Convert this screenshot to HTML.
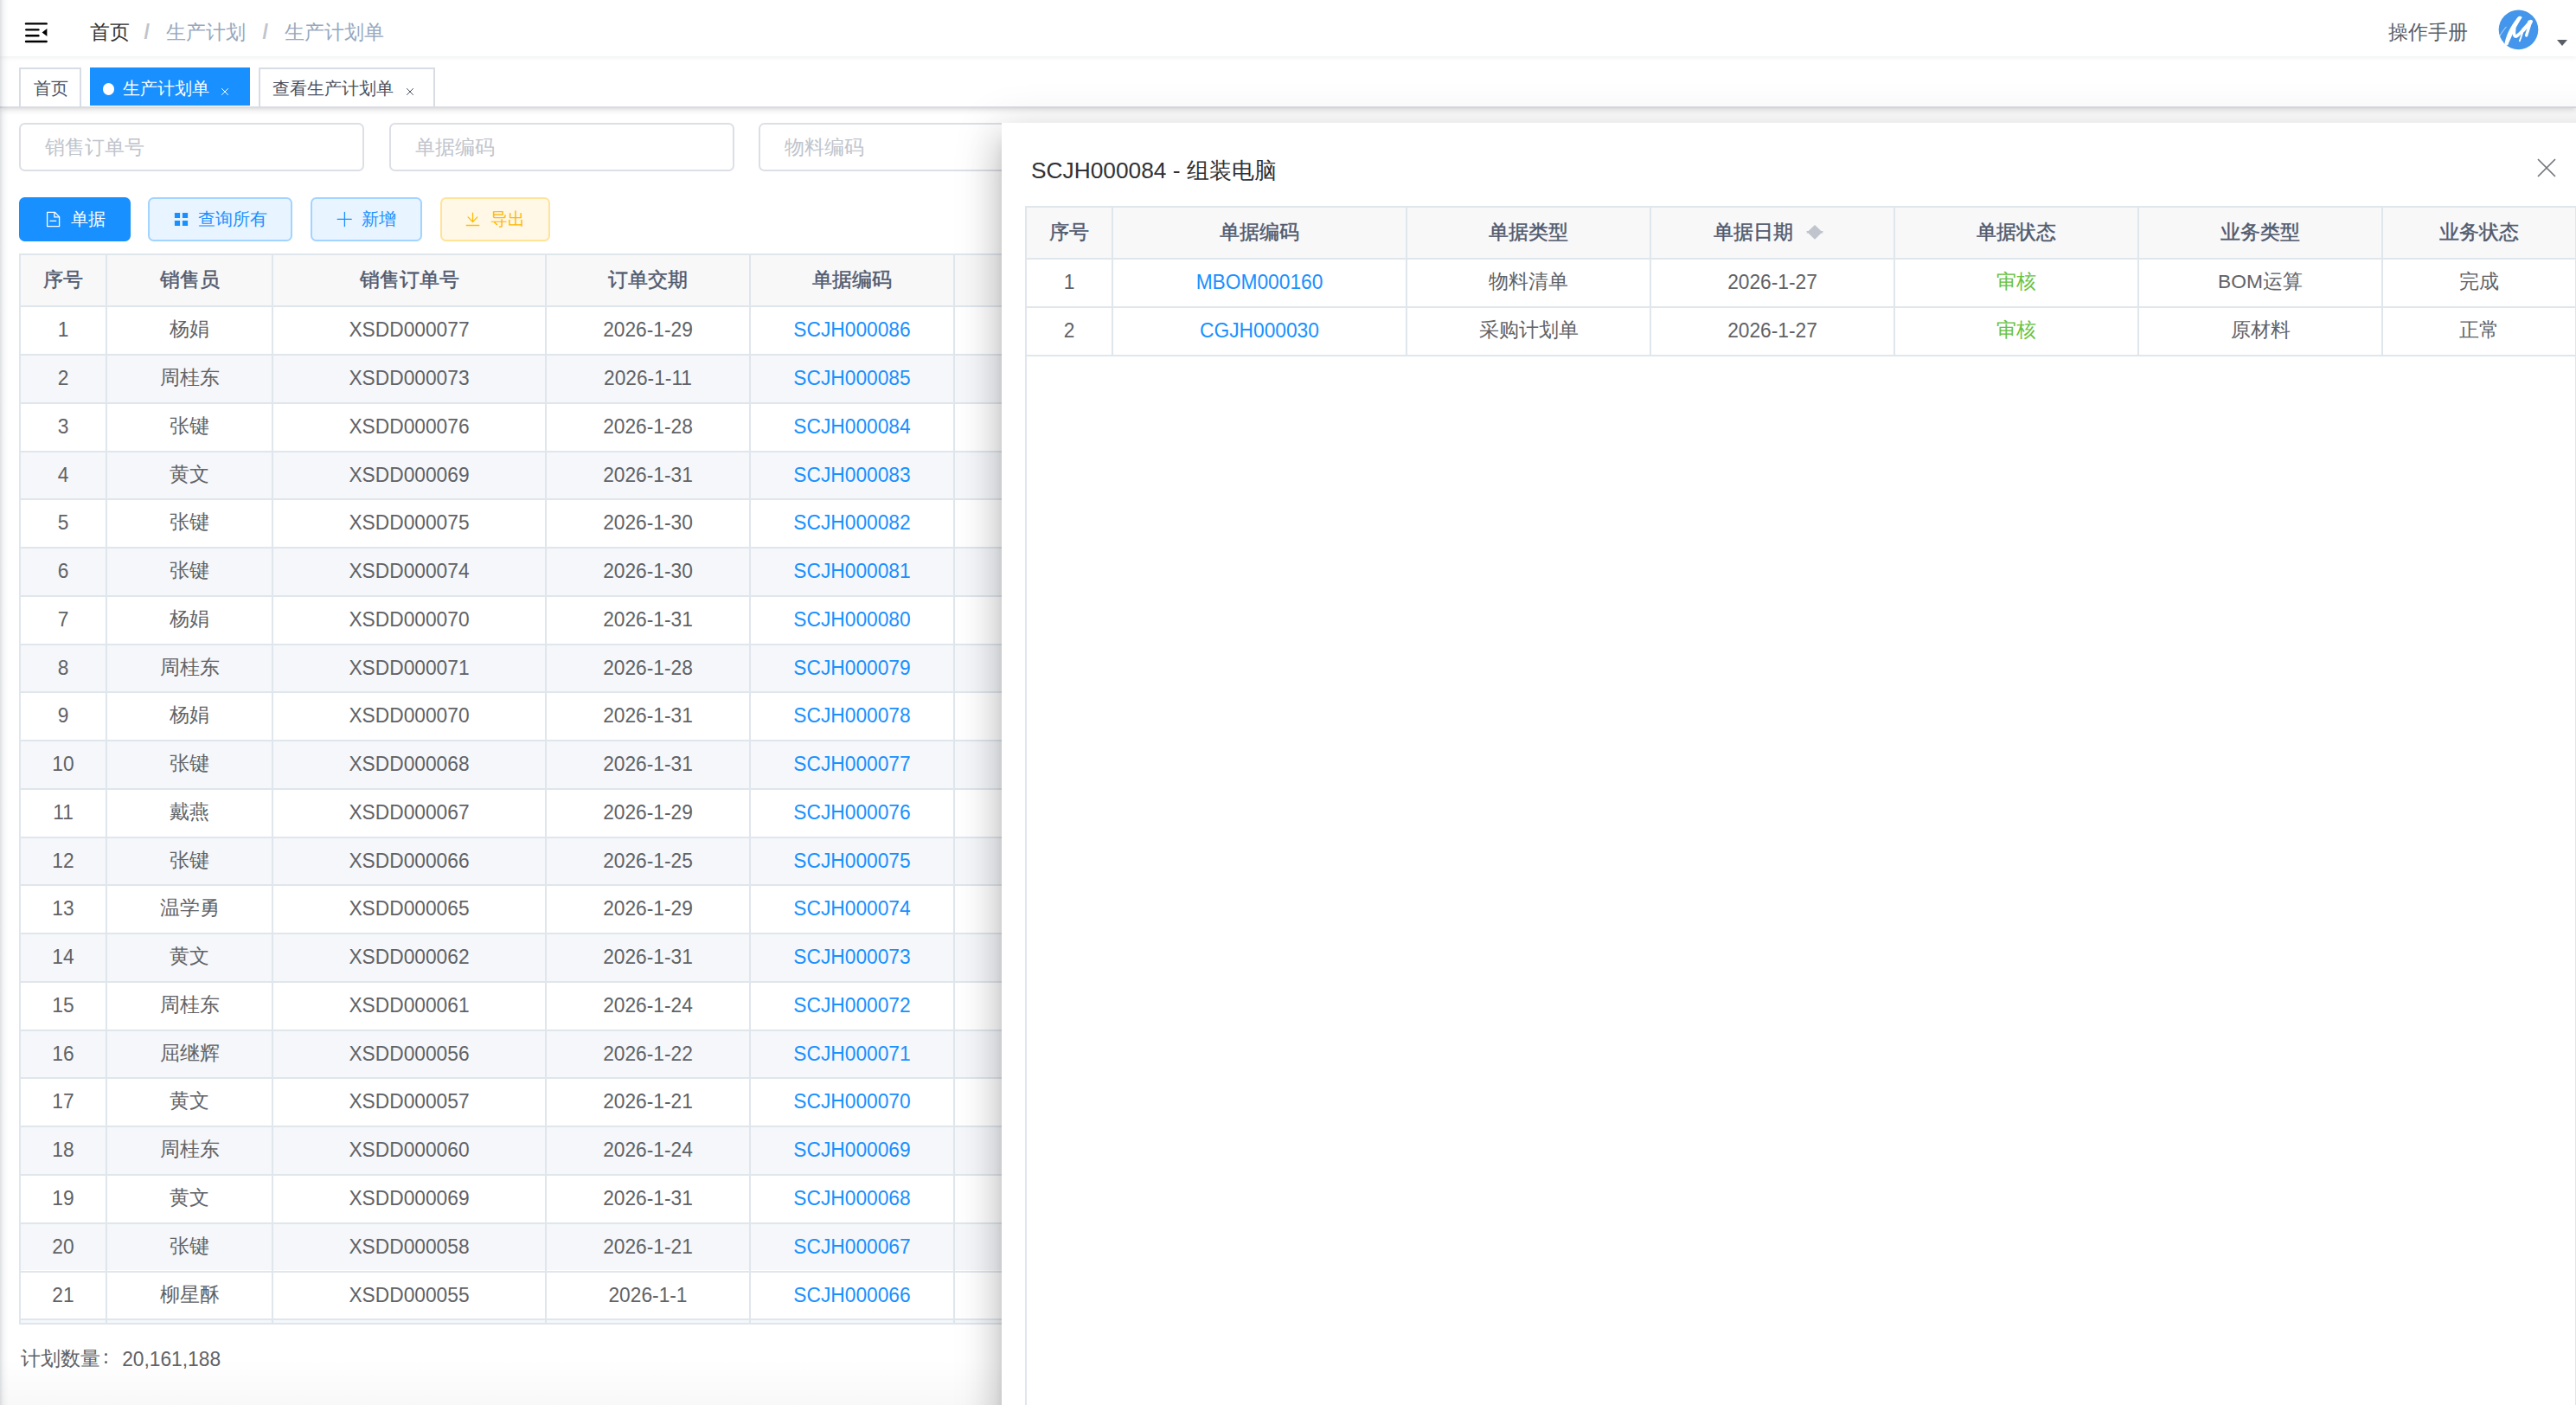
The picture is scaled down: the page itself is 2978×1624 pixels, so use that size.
<!DOCTYPE html>
<html><head><meta charset="utf-8"><title>生产计划单</title>
<style>
*{box-sizing:border-box;margin:0;padding:0}
html,body{width:2978px;height:1624px;overflow:hidden;background:#fff}
body{position:relative;font-family:"Liberation Sans",sans-serif;color:#606266;font-size:22.75px}
.abs{position:absolute}
.t{position:absolute;white-space:nowrap;line-height:1}
.hl{position:absolute;background:#dfe6ec;height:2px}
.vl{position:absolute;background:#dfe6ec;width:2px}
.cell{position:absolute;text-align:center;white-space:nowrap;font-size:22.75px;color:#606266}
.hcell{position:absolute;text-align:center;white-space:nowrap;font-size:22.75px;color:#515a6e;font-weight:500;-webkit-text-stroke:0.45px #515a6e}
.lnk{color:#1890ff}
</style></head><body>

<div class="abs" style="left:0;top:0;width:10px;height:1624px;background:linear-gradient(to right,rgba(0,21,41,0.13),rgba(0,21,41,0.04) 40%,rgba(0,21,41,0) 100%);z-index:50"></div>
<div class="abs" style="left:0;top:0;width:2978px;height:65px;background:#fff;box-shadow:0 1px 6px rgba(0,21,41,.08);z-index:5">
<svg class="abs" style="left:24px;top:20px" width="36" height="36" viewBox="0 0 36 36">
<g stroke="#000" stroke-width="2.4" stroke-linecap="round">
<line x1="6" y1="7.4" x2="29.7" y2="7.4"/>
<line x1="6.3" y1="14.35" x2="20.4" y2="14.35"/>
<line x1="6.3" y1="21.2" x2="20.4" y2="21.2"/>
<line x1="6" y1="28.05" x2="29.7" y2="28.05"/>
</g>
<polygon points="24.6,17.4 30.4,12.9 30.4,22.1" fill="#000"/>
</svg>
<div class="t" style="left:104px;top:20px;font-size:22.75px;line-height:35px;color:#303133">首页</div>
<div class="t" style="left:166.5px;top:20px;font-size:23.5px;line-height:35px;color:#c0c4cc;font-weight:bold">/</div>
<div class="t" style="left:192px;top:20px;font-size:22.75px;line-height:35px;color:#97a8be">生产计划</div>
<div class="t" style="left:303.5px;top:20px;font-size:23.5px;line-height:35px;color:#c0c4cc;font-weight:bold">/</div>
<div class="t" style="left:329px;top:20px;font-size:22.75px;line-height:35px;color:#97a8be">生产计划单</div>
<div class="t" style="left:2761px;top:20px;font-size:22.75px;line-height:35px;color:#5a5e66">操作手册</div>
<svg class="abs" style="left:2884px;top:8px" width="56" height="54" viewBox="0 0 56 54">
<circle cx="27.5" cy="26.35" r="22.8" fill="#4396ec"/>
<path d="M11.3,43.6 C12.5,35 17,24 26.5,12 C28,10.3 31,10.2 31.6,12.3 C28,18 24.5,24 21.5,30 C19,35 17,40 15.3,44 C14,45 12,45 11.3,43.6 Z" fill="#fff"/>
<g fill="none" stroke="#fff" stroke-linecap="round" stroke-linejoin="round">
<path d="M22.8,25.5 C21.8,31 22.5,35.5 25.5,33.8 C28.5,31.5 31,28.8 33.8,26" stroke-width="3.6"/>
<path d="M33,26.8 L41.8,17" stroke-width="4.4"/>
<path d="M41.6,17.2 L36.6,33" stroke-width="3.4"/>
<path d="M32.8,28 L28.9,39.3" stroke-width="1.9"/>
<path d="M38.4,17.4 L39.5,16 L40.5,18" stroke-width="1.2"/>
<path d="M4.2,37 C5.5,33 9,28.5 13.2,23.2" stroke-width="0.7"/>
<path d="M4.2,37.5 C3.5,39 4.5,40 6.5,39" stroke-width="0.7"/>
<path d="M6.5,41 L9.5,40 M5.5,43 L9,42 M6.5,45.5 L10.5,43.5" stroke-width="0.7"/>
</g>
</svg>
<svg class="abs" style="left:2955px;top:45px" width="14" height="9" viewBox="0 0 14 9"><polygon points="1,1 13,1 7,8" fill="#5a5e66"/></svg>
</div>
<div class="abs" style="left:0;top:65px;width:2978px;height:60px;background:#fff;border-bottom:2px solid #d8dce5;box-shadow:0 2px 6.5px 0 rgba(0,0,0,.13),0 0 5px 0 rgba(0,0,0,.04);z-index:4"></div>
<div class="abs" style="left:22px;top:78px;width:72px;height:45px;border:2px solid #d8dce5;border-bottom:none;background:#fff;z-index:6"></div>
<div class="t" style="left:39px;top:78px;font-size:19.5px;line-height:48px;color:#495060;z-index:7">首页</div>
<div class="abs" style="left:104px;top:78px;width:185px;height:44px;background:#1890ff;z-index:6"></div>
<div class="abs" style="left:118.6px;top:96px;width:13.6px;height:13.6px;border-radius:50%;background:#fff;z-index:7"></div>
<div class="t" style="left:141.5px;top:78px;font-size:19.5px;line-height:48px;color:#fff;z-index:7">生产计划单</div>
<svg class="abs" style="left:255px;top:101px;z-index:7" width="10" height="10" viewBox="0 0 10 10"><path d="M1.2,1.2 L8.8,8.8 M8.8,1.2 L1.2,8.8" stroke="#fff" stroke-width="1"/></svg>
<div class="abs" style="left:299px;top:78px;width:204px;height:45px;border:2px solid #d8dce5;border-bottom:none;background:#fff;z-index:6"></div>
<div class="t" style="left:315px;top:78px;font-size:19.5px;line-height:48px;color:#495060;z-index:7">查看生产计划单</div>
<svg class="abs" style="left:469px;top:101px;z-index:7" width="10" height="10" viewBox="0 0 10 10"><path d="M1.2,1.2 L8.8,8.8 M8.8,1.2 L1.2,8.8" stroke="#495060" stroke-width="1"/></svg>
<div class="abs" style="left:22px;top:142px;width:399px;height:56px;border:2px solid #dcdfe6;border-radius:6.5px;background:#fff"></div>
<div class="t" style="left:52px;top:142px;font-size:22.75px;line-height:56px;color:#c0c4cc">销售订单号</div>
<div class="abs" style="left:449.6px;top:142px;width:399px;height:56px;border:2px solid #dcdfe6;border-radius:6.5px;background:#fff"></div>
<div class="t" style="left:479.6px;top:142px;font-size:22.75px;line-height:56px;color:#c0c4cc">单据编码</div>
<div class="abs" style="left:877px;top:142px;width:399px;height:56px;border:2px solid #dcdfe6;border-radius:6.5px;background:#fff"></div>
<div class="t" style="left:907px;top:142px;font-size:22.75px;line-height:56px;color:#c0c4cc">物料编码</div>
<div class="abs" style="left:22px;top:228px;width:128.5px;height:50.5px;border-radius:6.5px;background:#1890ff"></div>
<svg class="abs" style="left:50px;top:241px" width="24" height="25" viewBox="0 0 24 25">
<path d="M4.6,4.3 L13.3,4.3 L18.6,9.6 L18.6,20.7 L4.6,20.7 Z" fill="none" stroke="#fff" stroke-width="1.3" stroke-linejoin="round"/>
<path d="M12.9,4.3 L12.9,9.8 L18.6,9.8" fill="none" stroke="#fff" stroke-width="1.3"/>
<line x1="8" y1="14.4" x2="14.7" y2="14.4" stroke="#fff" stroke-width="1.3" stroke-linecap="round"/>
</svg>
<div class="t" style="left:82px;top:228px;font-size:19.5px;line-height:50.5px;color:#fff">单据</div>
<div class="abs" style="left:171.2px;top:228px;width:167.2px;height:50.5px;border-radius:6.5px;background:#e8f4ff;border:2px solid #a3d3ff"></div>
<svg class="abs" style="left:195px;top:238px" width="30" height="30" viewBox="0 0 30 30" fill="#1890ff">
<rect x="6.9" y="7.9" width="6.2" height="6.2" rx="0.5"/><rect x="15.9" y="7.9" width="6.2" height="6.2" rx="0.5"/>
<rect x="6.9" y="16.9" width="6.2" height="6.2" rx="0.5"/><rect x="15.9" y="16.9" width="6.2" height="6.2" rx="0.5"/>
</svg>
<div class="t" style="left:229.1px;top:228px;font-size:19.5px;line-height:50.5px;color:#1890ff">查询所有</div>
<div class="abs" style="left:359.3px;top:228px;width:128.3px;height:50.5px;border-radius:6.5px;background:#e8f4ff;border:2px solid #a3d3ff"></div>
<svg class="abs" style="left:385px;top:240px" width="25" height="25" viewBox="0 0 25 25">
<path d="M5.2,13.4 L21.2,13.4 M13.4,5.3 L13.4,21.5" stroke="#1890ff" stroke-width="1.3" stroke-linecap="round"/>
</svg>
<div class="t" style="left:418px;top:228px;font-size:19.5px;line-height:50.5px;color:#1890ff">新增</div>
<div class="abs" style="left:508.6px;top:228px;width:127.1px;height:50.5px;border-radius:6.5px;background:#fff8e6;border:2px solid #ffe399"></div>
<svg class="abs" style="left:534px;top:240px" width="25" height="25" viewBox="0 0 25 25">
<path d="M12.5,6.1 L12.5,16.5 M7.1,10.9 L12.5,16.5 L17.8,10.9 M5.3,20.5 L19.75,20.5" stroke="#ffba00" stroke-width="1.3" stroke-linecap="round" stroke-linejoin="round" fill="none"/>
</svg>
<div class="t" style="left:567px;top:228px;font-size:19.5px;line-height:50.5px;color:#ffba00">导出</div>
<div class="abs" style="left:22px;top:293px;width:1140px;height:60.30000000000001px;background:#f8f8f9"></div>
<div class="abs" style="left:22px;top:409.06px;width:1140px;height:55.76px;background:#f5f7fa"></div>
<div class="abs" style="left:22px;top:520.58px;width:1140px;height:55.76px;background:#f5f7fa"></div>
<div class="abs" style="left:22px;top:632.10px;width:1140px;height:55.76px;background:#f5f7fa"></div>
<div class="abs" style="left:22px;top:743.62px;width:1140px;height:55.76px;background:#f5f7fa"></div>
<div class="abs" style="left:22px;top:855.14px;width:1140px;height:55.76px;background:#f5f7fa"></div>
<div class="abs" style="left:22px;top:966.66px;width:1140px;height:55.76px;background:#f5f7fa"></div>
<div class="abs" style="left:22px;top:1078.18px;width:1140px;height:55.76px;background:#f5f7fa"></div>
<div class="abs" style="left:22px;top:1189.70px;width:1140px;height:55.76px;background:#f5f7fa"></div>
<div class="abs" style="left:22px;top:1301.22px;width:1140px;height:55.76px;background:#f5f7fa"></div>
<div class="abs" style="left:22px;top:1412.74px;width:1140px;height:55.76px;background:#f5f7fa"></div>
<div class="abs" style="left:22px;top:1524.26px;width:1140px;height:55.76px;background:#f5f7fa"></div>
<div class="abs" style="left:0;top:1530.70px;width:1170px;height:93.50px;background:#fff"></div>
<div class="hl" style="left:22px;top:293px;width:1140px"></div>
<div class="hl" style="left:22px;top:353.30px;width:1140px"></div>
<div class="hl" style="left:22px;top:409.06px;width:1140px"></div>
<div class="hl" style="left:22px;top:464.82px;width:1140px"></div>
<div class="hl" style="left:22px;top:520.58px;width:1140px"></div>
<div class="hl" style="left:22px;top:576.34px;width:1140px"></div>
<div class="hl" style="left:22px;top:632.10px;width:1140px"></div>
<div class="hl" style="left:22px;top:687.86px;width:1140px"></div>
<div class="hl" style="left:22px;top:743.62px;width:1140px"></div>
<div class="hl" style="left:22px;top:799.38px;width:1140px"></div>
<div class="hl" style="left:22px;top:855.14px;width:1140px"></div>
<div class="hl" style="left:22px;top:910.90px;width:1140px"></div>
<div class="hl" style="left:22px;top:966.66px;width:1140px"></div>
<div class="hl" style="left:22px;top:1022.42px;width:1140px"></div>
<div class="hl" style="left:22px;top:1078.18px;width:1140px"></div>
<div class="hl" style="left:22px;top:1133.94px;width:1140px"></div>
<div class="hl" style="left:22px;top:1189.70px;width:1140px"></div>
<div class="hl" style="left:22px;top:1245.46px;width:1140px"></div>
<div class="hl" style="left:22px;top:1301.22px;width:1140px"></div>
<div class="hl" style="left:22px;top:1356.98px;width:1140px"></div>
<div class="hl" style="left:22px;top:1412.74px;width:1140px"></div>
<div class="hl" style="left:22px;top:1468.50px;width:1140px"></div>
<div class="hl" style="left:22px;top:1524.26px;width:1140px"></div>
<div class="hl" style="left:22px;top:1528.50px;width:1140px;height:2.2px"></div>
<div class="vl" style="left:22px;top:293px;height:1237.50px"></div>
<div class="vl" style="left:122px;top:293px;height:1237.50px"></div>
<div class="vl" style="left:314px;top:293px;height:1237.50px"></div>
<div class="vl" style="left:630px;top:293px;height:1237.50px"></div>
<div class="vl" style="left:866px;top:293px;height:1237.50px"></div>
<div class="vl" style="left:1102px;top:293px;height:1237.50px"></div>
<div class="hcell" style="left:24px;top:294px;width:98px;line-height:58.30px">序号</div>
<div class="hcell" style="left:124px;top:294px;width:190px;line-height:58.30px">销售员</div>
<div class="hcell" style="left:316px;top:294px;width:314px;line-height:58.30px">销售订单号</div>
<div class="hcell" style="left:632px;top:294px;width:234px;line-height:58.30px">订单交期</div>
<div class="hcell" style="left:868px;top:294px;width:234px;line-height:58.30px">单据编码</div>
<div class="cell" style="transform:scaleY(1.08);left:24px;top:354.30px;width:98px;line-height:53.76px">1</div>
<div class="cell" style="left:124px;top:354.30px;width:190px;line-height:53.76px">杨娟</div>
<div class="cell" style="transform:scaleY(1.08);left:316px;top:354.30px;width:314px;line-height:53.76px">XSDD000077</div>
<div class="cell" style="transform:scaleY(1.08);left:632px;top:354.30px;width:234px;line-height:53.76px">2026-1-29</div>
<div class="cell lnk" style="transform:scaleY(1.08);left:868px;top:354.30px;width:234px;line-height:53.76px">SCJH000086</div>
<div class="cell" style="transform:scaleY(1.08);left:24px;top:410.06px;width:98px;line-height:53.76px">2</div>
<div class="cell" style="left:124px;top:410.06px;width:190px;line-height:53.76px">周桂东</div>
<div class="cell" style="transform:scaleY(1.08);left:316px;top:410.06px;width:314px;line-height:53.76px">XSDD000073</div>
<div class="cell" style="transform:scaleY(1.08);left:632px;top:410.06px;width:234px;line-height:53.76px">2026-1-11</div>
<div class="cell lnk" style="transform:scaleY(1.08);left:868px;top:410.06px;width:234px;line-height:53.76px">SCJH000085</div>
<div class="cell" style="transform:scaleY(1.08);left:24px;top:465.82px;width:98px;line-height:53.76px">3</div>
<div class="cell" style="left:124px;top:465.82px;width:190px;line-height:53.76px">张键</div>
<div class="cell" style="transform:scaleY(1.08);left:316px;top:465.82px;width:314px;line-height:53.76px">XSDD000076</div>
<div class="cell" style="transform:scaleY(1.08);left:632px;top:465.82px;width:234px;line-height:53.76px">2026-1-28</div>
<div class="cell lnk" style="transform:scaleY(1.08);left:868px;top:465.82px;width:234px;line-height:53.76px">SCJH000084</div>
<div class="cell" style="transform:scaleY(1.08);left:24px;top:521.58px;width:98px;line-height:53.76px">4</div>
<div class="cell" style="left:124px;top:521.58px;width:190px;line-height:53.76px">黄文</div>
<div class="cell" style="transform:scaleY(1.08);left:316px;top:521.58px;width:314px;line-height:53.76px">XSDD000069</div>
<div class="cell" style="transform:scaleY(1.08);left:632px;top:521.58px;width:234px;line-height:53.76px">2026-1-31</div>
<div class="cell lnk" style="transform:scaleY(1.08);left:868px;top:521.58px;width:234px;line-height:53.76px">SCJH000083</div>
<div class="cell" style="transform:scaleY(1.08);left:24px;top:577.34px;width:98px;line-height:53.76px">5</div>
<div class="cell" style="left:124px;top:577.34px;width:190px;line-height:53.76px">张键</div>
<div class="cell" style="transform:scaleY(1.08);left:316px;top:577.34px;width:314px;line-height:53.76px">XSDD000075</div>
<div class="cell" style="transform:scaleY(1.08);left:632px;top:577.34px;width:234px;line-height:53.76px">2026-1-30</div>
<div class="cell lnk" style="transform:scaleY(1.08);left:868px;top:577.34px;width:234px;line-height:53.76px">SCJH000082</div>
<div class="cell" style="transform:scaleY(1.08);left:24px;top:633.10px;width:98px;line-height:53.76px">6</div>
<div class="cell" style="left:124px;top:633.10px;width:190px;line-height:53.76px">张键</div>
<div class="cell" style="transform:scaleY(1.08);left:316px;top:633.10px;width:314px;line-height:53.76px">XSDD000074</div>
<div class="cell" style="transform:scaleY(1.08);left:632px;top:633.10px;width:234px;line-height:53.76px">2026-1-30</div>
<div class="cell lnk" style="transform:scaleY(1.08);left:868px;top:633.10px;width:234px;line-height:53.76px">SCJH000081</div>
<div class="cell" style="transform:scaleY(1.08);left:24px;top:688.86px;width:98px;line-height:53.76px">7</div>
<div class="cell" style="left:124px;top:688.86px;width:190px;line-height:53.76px">杨娟</div>
<div class="cell" style="transform:scaleY(1.08);left:316px;top:688.86px;width:314px;line-height:53.76px">XSDD000070</div>
<div class="cell" style="transform:scaleY(1.08);left:632px;top:688.86px;width:234px;line-height:53.76px">2026-1-31</div>
<div class="cell lnk" style="transform:scaleY(1.08);left:868px;top:688.86px;width:234px;line-height:53.76px">SCJH000080</div>
<div class="cell" style="transform:scaleY(1.08);left:24px;top:744.62px;width:98px;line-height:53.76px">8</div>
<div class="cell" style="left:124px;top:744.62px;width:190px;line-height:53.76px">周桂东</div>
<div class="cell" style="transform:scaleY(1.08);left:316px;top:744.62px;width:314px;line-height:53.76px">XSDD000071</div>
<div class="cell" style="transform:scaleY(1.08);left:632px;top:744.62px;width:234px;line-height:53.76px">2026-1-28</div>
<div class="cell lnk" style="transform:scaleY(1.08);left:868px;top:744.62px;width:234px;line-height:53.76px">SCJH000079</div>
<div class="cell" style="transform:scaleY(1.08);left:24px;top:800.38px;width:98px;line-height:53.76px">9</div>
<div class="cell" style="left:124px;top:800.38px;width:190px;line-height:53.76px">杨娟</div>
<div class="cell" style="transform:scaleY(1.08);left:316px;top:800.38px;width:314px;line-height:53.76px">XSDD000070</div>
<div class="cell" style="transform:scaleY(1.08);left:632px;top:800.38px;width:234px;line-height:53.76px">2026-1-31</div>
<div class="cell lnk" style="transform:scaleY(1.08);left:868px;top:800.38px;width:234px;line-height:53.76px">SCJH000078</div>
<div class="cell" style="transform:scaleY(1.08);left:24px;top:856.14px;width:98px;line-height:53.76px">10</div>
<div class="cell" style="left:124px;top:856.14px;width:190px;line-height:53.76px">张键</div>
<div class="cell" style="transform:scaleY(1.08);left:316px;top:856.14px;width:314px;line-height:53.76px">XSDD000068</div>
<div class="cell" style="transform:scaleY(1.08);left:632px;top:856.14px;width:234px;line-height:53.76px">2026-1-31</div>
<div class="cell lnk" style="transform:scaleY(1.08);left:868px;top:856.14px;width:234px;line-height:53.76px">SCJH000077</div>
<div class="cell" style="transform:scaleY(1.08);left:24px;top:911.90px;width:98px;line-height:53.76px">11</div>
<div class="cell" style="left:124px;top:911.90px;width:190px;line-height:53.76px">戴燕</div>
<div class="cell" style="transform:scaleY(1.08);left:316px;top:911.90px;width:314px;line-height:53.76px">XSDD000067</div>
<div class="cell" style="transform:scaleY(1.08);left:632px;top:911.90px;width:234px;line-height:53.76px">2026-1-29</div>
<div class="cell lnk" style="transform:scaleY(1.08);left:868px;top:911.90px;width:234px;line-height:53.76px">SCJH000076</div>
<div class="cell" style="transform:scaleY(1.08);left:24px;top:967.66px;width:98px;line-height:53.76px">12</div>
<div class="cell" style="left:124px;top:967.66px;width:190px;line-height:53.76px">张键</div>
<div class="cell" style="transform:scaleY(1.08);left:316px;top:967.66px;width:314px;line-height:53.76px">XSDD000066</div>
<div class="cell" style="transform:scaleY(1.08);left:632px;top:967.66px;width:234px;line-height:53.76px">2026-1-25</div>
<div class="cell lnk" style="transform:scaleY(1.08);left:868px;top:967.66px;width:234px;line-height:53.76px">SCJH000075</div>
<div class="cell" style="transform:scaleY(1.08);left:24px;top:1023.42px;width:98px;line-height:53.76px">13</div>
<div class="cell" style="left:124px;top:1023.42px;width:190px;line-height:53.76px">温学勇</div>
<div class="cell" style="transform:scaleY(1.08);left:316px;top:1023.42px;width:314px;line-height:53.76px">XSDD000065</div>
<div class="cell" style="transform:scaleY(1.08);left:632px;top:1023.42px;width:234px;line-height:53.76px">2026-1-29</div>
<div class="cell lnk" style="transform:scaleY(1.08);left:868px;top:1023.42px;width:234px;line-height:53.76px">SCJH000074</div>
<div class="cell" style="transform:scaleY(1.08);left:24px;top:1079.18px;width:98px;line-height:53.76px">14</div>
<div class="cell" style="left:124px;top:1079.18px;width:190px;line-height:53.76px">黄文</div>
<div class="cell" style="transform:scaleY(1.08);left:316px;top:1079.18px;width:314px;line-height:53.76px">XSDD000062</div>
<div class="cell" style="transform:scaleY(1.08);left:632px;top:1079.18px;width:234px;line-height:53.76px">2026-1-31</div>
<div class="cell lnk" style="transform:scaleY(1.08);left:868px;top:1079.18px;width:234px;line-height:53.76px">SCJH000073</div>
<div class="cell" style="transform:scaleY(1.08);left:24px;top:1134.94px;width:98px;line-height:53.76px">15</div>
<div class="cell" style="left:124px;top:1134.94px;width:190px;line-height:53.76px">周桂东</div>
<div class="cell" style="transform:scaleY(1.08);left:316px;top:1134.94px;width:314px;line-height:53.76px">XSDD000061</div>
<div class="cell" style="transform:scaleY(1.08);left:632px;top:1134.94px;width:234px;line-height:53.76px">2026-1-24</div>
<div class="cell lnk" style="transform:scaleY(1.08);left:868px;top:1134.94px;width:234px;line-height:53.76px">SCJH000072</div>
<div class="cell" style="transform:scaleY(1.08);left:24px;top:1190.70px;width:98px;line-height:53.76px">16</div>
<div class="cell" style="left:124px;top:1190.70px;width:190px;line-height:53.76px">屈继辉</div>
<div class="cell" style="transform:scaleY(1.08);left:316px;top:1190.70px;width:314px;line-height:53.76px">XSDD000056</div>
<div class="cell" style="transform:scaleY(1.08);left:632px;top:1190.70px;width:234px;line-height:53.76px">2026-1-22</div>
<div class="cell lnk" style="transform:scaleY(1.08);left:868px;top:1190.70px;width:234px;line-height:53.76px">SCJH000071</div>
<div class="cell" style="transform:scaleY(1.08);left:24px;top:1246.46px;width:98px;line-height:53.76px">17</div>
<div class="cell" style="left:124px;top:1246.46px;width:190px;line-height:53.76px">黄文</div>
<div class="cell" style="transform:scaleY(1.08);left:316px;top:1246.46px;width:314px;line-height:53.76px">XSDD000057</div>
<div class="cell" style="transform:scaleY(1.08);left:632px;top:1246.46px;width:234px;line-height:53.76px">2026-1-21</div>
<div class="cell lnk" style="transform:scaleY(1.08);left:868px;top:1246.46px;width:234px;line-height:53.76px">SCJH000070</div>
<div class="cell" style="transform:scaleY(1.08);left:24px;top:1302.22px;width:98px;line-height:53.76px">18</div>
<div class="cell" style="left:124px;top:1302.22px;width:190px;line-height:53.76px">周桂东</div>
<div class="cell" style="transform:scaleY(1.08);left:316px;top:1302.22px;width:314px;line-height:53.76px">XSDD000060</div>
<div class="cell" style="transform:scaleY(1.08);left:632px;top:1302.22px;width:234px;line-height:53.76px">2026-1-24</div>
<div class="cell lnk" style="transform:scaleY(1.08);left:868px;top:1302.22px;width:234px;line-height:53.76px">SCJH000069</div>
<div class="cell" style="transform:scaleY(1.08);left:24px;top:1357.98px;width:98px;line-height:53.76px">19</div>
<div class="cell" style="left:124px;top:1357.98px;width:190px;line-height:53.76px">黄文</div>
<div class="cell" style="transform:scaleY(1.08);left:316px;top:1357.98px;width:314px;line-height:53.76px">XSDD000069</div>
<div class="cell" style="transform:scaleY(1.08);left:632px;top:1357.98px;width:234px;line-height:53.76px">2026-1-31</div>
<div class="cell lnk" style="transform:scaleY(1.08);left:868px;top:1357.98px;width:234px;line-height:53.76px">SCJH000068</div>
<div class="cell" style="transform:scaleY(1.08);left:24px;top:1413.74px;width:98px;line-height:53.76px">20</div>
<div class="cell" style="left:124px;top:1413.74px;width:190px;line-height:53.76px">张键</div>
<div class="cell" style="transform:scaleY(1.08);left:316px;top:1413.74px;width:314px;line-height:53.76px">XSDD000058</div>
<div class="cell" style="transform:scaleY(1.08);left:632px;top:1413.74px;width:234px;line-height:53.76px">2026-1-21</div>
<div class="cell lnk" style="transform:scaleY(1.08);left:868px;top:1413.74px;width:234px;line-height:53.76px">SCJH000067</div>
<div class="cell" style="transform:scaleY(1.08);left:24px;top:1469.50px;width:98px;line-height:53.76px">21</div>
<div class="cell" style="left:124px;top:1469.50px;width:190px;line-height:53.76px">柳星酥</div>
<div class="cell" style="transform:scaleY(1.08);left:316px;top:1469.50px;width:314px;line-height:53.76px">XSDD000055</div>
<div class="cell" style="transform:scaleY(1.08);left:632px;top:1469.50px;width:234px;line-height:53.76px">2026-1-1</div>
<div class="cell lnk" style="transform:scaleY(1.08);left:868px;top:1469.50px;width:234px;line-height:53.76px">SCJH000066</div>
<div class="t" style="left:23.5px;top:1552.5px;font-size:22.75px;line-height:35px;color:#606266">计划数量</div>
<div class="abs" style="left:121.2px;top:1563.9px;width:3px;height:3px;border-radius:50%;background:#606266"></div>
<div class="abs" style="left:121.2px;top:1573.1px;width:3px;height:3px;border-radius:50%;background:#606266"></div>
<div class="t" style="left:141.2px;top:1552.5px;font-size:22.75px;line-height:35px;color:#606266;transform:scaleY(1.08)">20,161,188</div>
<div class="abs" style="left:0;top:1570px;width:2978px;height:54px;background:linear-gradient(to bottom,rgba(0,0,0,0),rgba(0,0,0,0.028))"></div>
<div class="abs" style="left:0;top:65px;width:2978px;height:1559px;overflow:hidden;z-index:20;pointer-events:none">
<div class="abs" style="left:1158px;top:77px;width:1900px;height:1600px;background:#fff;box-shadow:0 13px 16px -8px rgba(0,0,0,.2),0 26px 39px 3px rgba(0,0,0,.14),0 10px 49px 8px rgba(0,0,0,.12)">
<div class="t" style="left:34px;top:34.5px;font-size:26.3px;line-height:40px;color:#303133">SCJH000084 - 组装电脑</div>
<svg class="abs" style="left:1774px;top:40px" width="24" height="24" viewBox="0 0 24 24"><path d="M2,2 L22,22 M22,2 L2,22" stroke="#72767b" stroke-width="1.7"/></svg>
<div class="abs" style="left:27px;top:96.30px;width:1793px;height:60.10px;background:#f8f8f9"></div>
<div class="hl" style="left:27px;top:96.30px;width:1793px"></div>
<div class="hl" style="left:27px;top:156.40px;width:1793px"></div>
<div class="hl" style="left:27px;top:212.20px;width:1793px"></div>
<div class="hl" style="left:27px;top:268.00px;width:1793px"></div>
<div class="vl" style="left:27px;top:96.30px;height:1600px"></div>
<div class="vl" style="left:127px;top:96.30px;height:173.70px"></div>
<div class="vl" style="left:467px;top:96.30px;height:173.70px"></div>
<div class="vl" style="left:749px;top:96.30px;height:173.70px"></div>
<div class="vl" style="left:1031px;top:96.30px;height:173.70px"></div>
<div class="vl" style="left:1313px;top:96.30px;height:173.70px"></div>
<div class="vl" style="left:1595px;top:96.30px;height:173.70px"></div>
<div class="vl" style="left:1819px;top:96.30px;height:1600px"></div>
<div class="hcell" style="left:29px;top:97.30px;width:98px;line-height:58.10px">序号</div>
<div class="hcell" style="left:129px;top:97.30px;width:338px;line-height:58.10px">单据编码</div>
<div class="hcell" style="left:469px;top:97.30px;width:280px;line-height:58.10px">单据类型</div>
<div class="hcell" style="text-align:left;left:823px;top:97.30px;width:120px;line-height:58.10px">单据日期</div>
<div class="hcell" style="left:1033px;top:97.30px;width:280px;line-height:58.10px">单据状态</div>
<div class="hcell" style="left:1315px;top:97.30px;width:280px;line-height:58.10px">业务类型</div>
<div class="hcell" style="left:1597px;top:97.30px;width:222px;line-height:58.10px">业务状态</div>
<svg class="abs" style="left:928px;top:116px" width="24" height="22" viewBox="0 0 24 22"><polygon points="12,2.1 22,11.6 2,11.6" fill="#c0c4cc"/><polygon points="2,9.1 22,9.1 12,18.8" fill="#c0c4cc"/></svg>
<div class="cell" style="transform:scaleY(1.08);left:29px;top:157.40px;width:98px;line-height:53.80px">1</div>
<div class="cell lnk" style="transform:scaleY(1.08);left:129px;top:157.40px;width:338px;line-height:53.80px">MBOM000160</div>
<div class="cell" style="left:469px;top:157.40px;width:280px;line-height:53.80px">物料清单</div>
<div class="cell" style="transform:scaleY(1.08);left:751px;top:157.40px;width:280px;line-height:53.80px">2026-1-27</div>
<div class="cell" style="color:#67c23a;left:1033px;top:157.40px;width:280px;line-height:53.80px">审核</div>
<div class="cell" style="left:1315px;top:157.40px;width:280px;line-height:53.80px">BOM运算</div>
<div class="cell" style="left:1597px;top:157.40px;width:222px;line-height:53.80px">完成</div>
<div class="cell" style="transform:scaleY(1.08);left:29px;top:213.20px;width:98px;line-height:53.80px">2</div>
<div class="cell lnk" style="transform:scaleY(1.08);left:129px;top:213.20px;width:338px;line-height:53.80px">CGJH000030</div>
<div class="cell" style="left:469px;top:213.20px;width:280px;line-height:53.80px">采购计划单</div>
<div class="cell" style="transform:scaleY(1.08);left:751px;top:213.20px;width:280px;line-height:53.80px">2026-1-27</div>
<div class="cell" style="color:#67c23a;left:1033px;top:213.20px;width:280px;line-height:53.80px">审核</div>
<div class="cell" style="left:1315px;top:213.20px;width:280px;line-height:53.80px">原材料</div>
<div class="cell" style="left:1597px;top:213.20px;width:222px;line-height:53.80px">正常</div>
</div></div>
</body></html>
